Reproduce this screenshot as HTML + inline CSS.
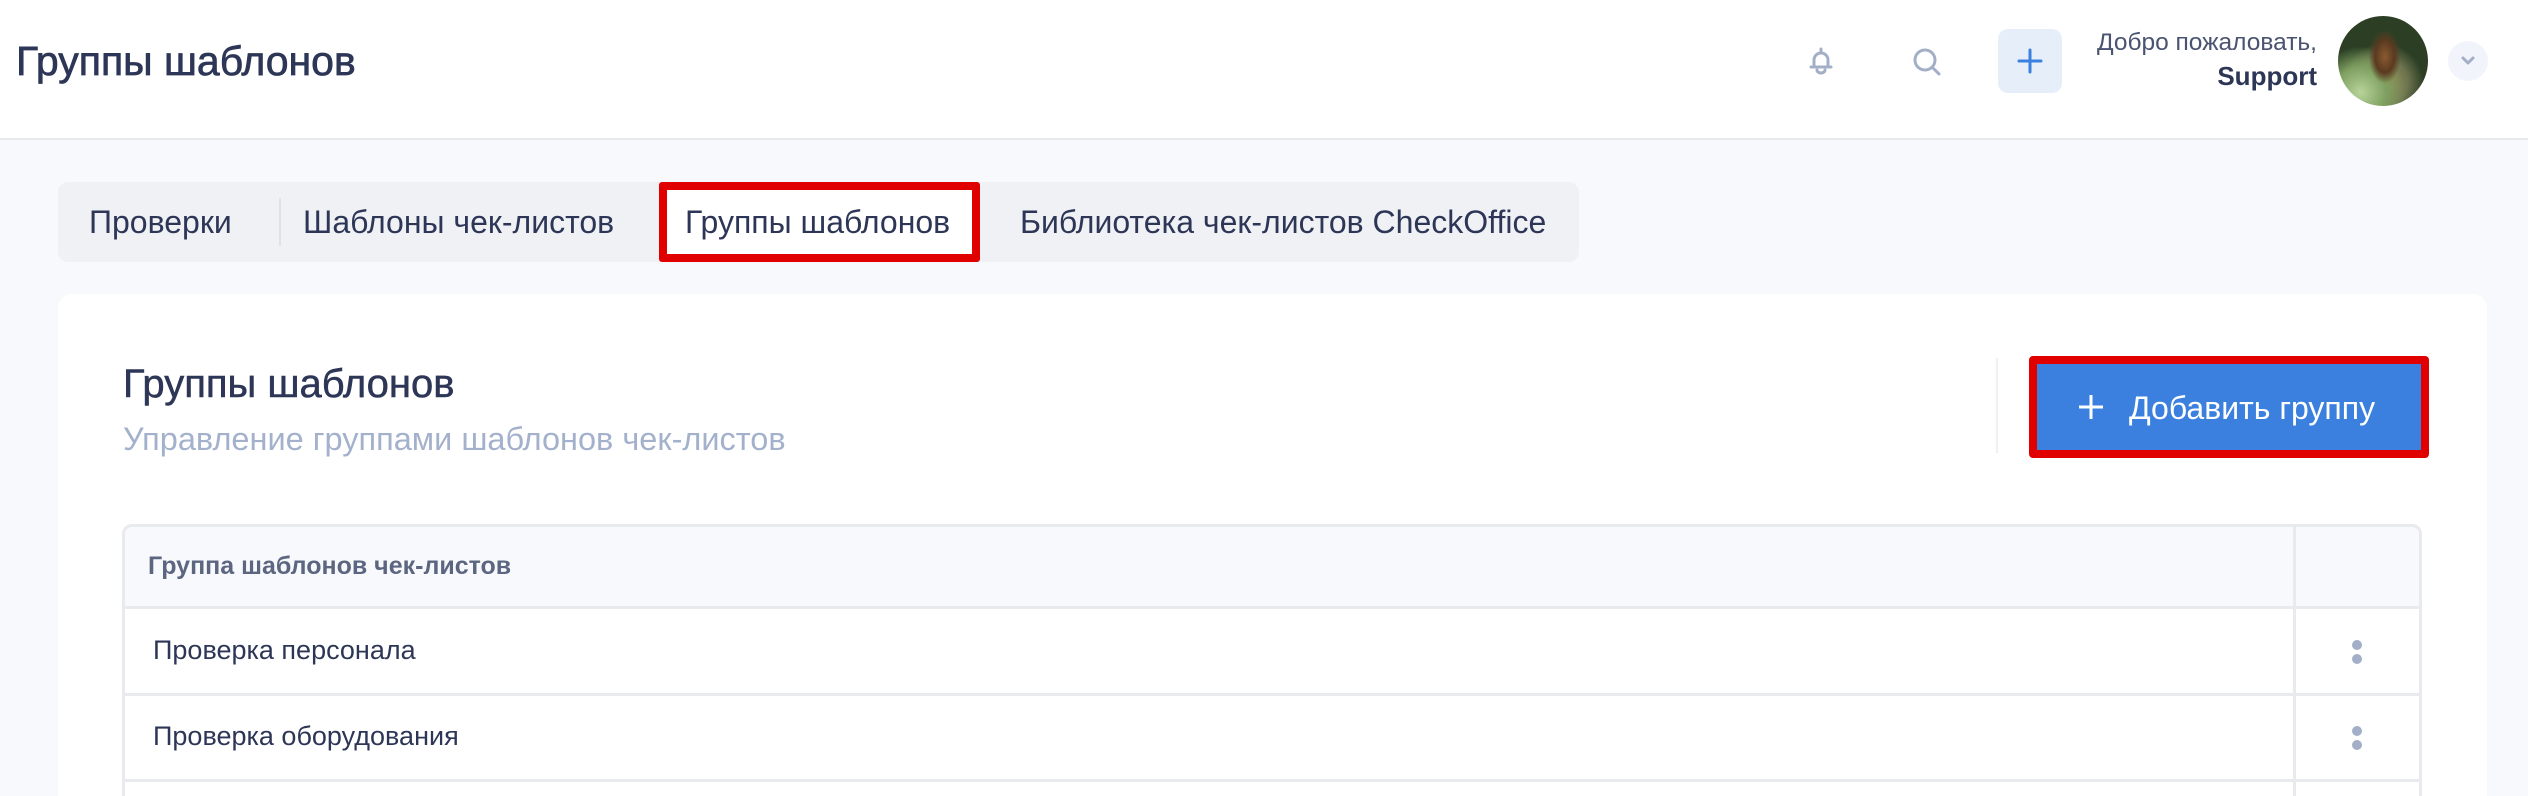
<!DOCTYPE html>
<html><head><meta charset="utf-8"><style>
*{margin:0;padding:0;box-sizing:border-box}
html,body{width:2528px;height:796px;overflow:hidden}
body{background:#f8f9fc;font-family:"Liberation Sans",Arial,sans-serif;color:#2d3656;position:relative}
.a{position:absolute;white-space:nowrap;line-height:1}
</style></head><body>
<div class="a" style="left:0;top:0;width:2528px;height:140px;background:#fff;border-bottom:2px solid #e9eaee"></div>
<div class="a" style="left:16px;top:41px;font-size:41px;-webkit-text-stroke:0.7px #2d3656;">Группы шаблонов</div>
<svg class="a" style="left:1806px;top:46px" width="30" height="30" viewBox="0 0 30 30" fill="none" stroke="#a3afc7" stroke-width="3" stroke-linecap="round" stroke-linejoin="round"><path d="M15 3v3M8 21V14a7 7 0 0 1 14 0v7M5 21h20M11 24a4 3 0 0 0 8 0"/></svg>
<svg class="a" style="left:1911px;top:46px" width="32" height="32" viewBox="0 0 32 32" fill="none" stroke="#a3afc7" stroke-width="3" stroke-linecap="round"><circle cx="14" cy="14" r="10"/><path d="M21.5 21.5L28 28"/></svg>
<div class="a" style="left:1998px;top:29px;width:64px;height:64px;background:#e6eff9;border-radius:10px"></div>
<svg class="a" style="left:2016px;top:47px" width="28" height="28" viewBox="0 0 28 28" stroke="#3b80de" stroke-width="3" stroke-linecap="round"><path d="M14 3v22M3 14h22"/></svg>
<div class="a" style="right:211px;top:31px;font-size:24.5px;color:#4a5370;text-align:right">Добро пожаловать,</div>
<div class="a" style="right:211px;top:63px;font-size:26px;font-weight:bold;color:#2d3656;text-align:right">Support</div>
<div class="a" style="left:2338px;top:16px;width:90px;height:90px;border-radius:50%;background:radial-gradient(ellipse 18% 30% at 52% 45%,#8a5a30 0,#5a3a20 60%,transparent 100%),radial-gradient(circle at 25% 85%,#b8d39a 0,#7ea060 25%,transparent 45%),radial-gradient(circle at 50% 75%,#9a8a50 0,#6f7550 30%,transparent 50%),#2c3f24"></div>
<div class="a" style="left:2448px;top:41px;width:40px;height:40px;border-radius:50%;background:#f1f4fb"></div>
<svg class="a" style="left:2460px;top:53px" width="16" height="16" viewBox="0 0 16 16" fill="none" stroke="#a3afc7" stroke-width="3" stroke-linecap="round" stroke-linejoin="round"><path d="M3 5l5 5 5-5"/></svg>

<div class="a" style="left:58px;top:182px;width:1521px;height:80px;background:#f0f1f5;border-radius:10px"></div>
<div class="a" style="left:89px;top:206px;font-size:32px;color:#2d3656">Проверки</div>
<div class="a" style="left:279px;top:198px;width:2px;height:48px;background:#dfe1e6"></div>
<div class="a" style="left:303px;top:206px;font-size:32px;color:#2d3656">Шаблоны чек-листов</div>
<div class="a" style="left:659px;top:182px;width:321px;height:80px;background:#fff;border:8px solid #e10000;border-radius:3px"></div>
<div class="a" style="left:685px;top:206px;font-size:32px;color:#2d3656">Группы шаблонов</div>
<div class="a" style="left:1020px;top:206px;font-size:32px;color:#2d3656">Библиотека чек-листов CheckOffice</div>

<div class="a" style="left:58px;top:294px;width:2429px;height:502px;background:#fff;border-radius:14px 14px 0 0"></div>
<div class="a" style="left:123px;top:364px;font-size:40px;color:#2d3656;-webkit-text-stroke:0.5px #2d3656">Группы шаблонов</div>
<div class="a" style="left:123px;top:423px;font-size:32.5px;color:#a3b1cc">Управление группами шаблонов чек-листов</div>
<div class="a" style="left:1996px;top:358px;width:2px;height:95px;background:#eef0f3"></div>
<div class="a" style="left:2029px;top:356px;width:400px;height:102px;background:#3b80de;border:8px solid #e10000;border-radius:4px"></div>
<svg class="a" style="left:2077px;top:393px" width="28" height="28" viewBox="0 0 28 28" stroke="#fff" stroke-width="3"><path d="M14 2v24M2 14h24"/></svg>
<div class="a" style="left:2129px;top:392px;font-size:32px;color:#fff">Добавить группу</div>

<div class="a" style="left:122px;top:524px;width:2300px;height:272px;border:3px solid #e9eaed;border-bottom:none;border-radius:10px 10px 0 0;background:#fff;overflow:hidden">
 <div style="position:absolute;left:0;top:0;width:100%;height:82px;background:#f8f9fc;border-bottom:3px solid #e9eaed"></div>
 <div style="position:absolute;left:0;top:166px;width:100%;height:3px;background:#e9eaed"></div>
 <div style="position:absolute;left:0;top:252px;width:100%;height:3px;background:#e9eaed"></div>
 <div style="position:absolute;left:2168px;top:0;width:3px;height:272px;background:#e9eaed"></div>
</div>
<div class="a" style="left:148px;top:554px;font-size:25px;font-weight:bold;color:#5c6680">Группа шаблонов чек-листов</div>
<div class="a" style="left:153px;top:637px;font-size:27px;color:#2d3656">Проверка персонала</div>
<div class="a" style="left:153px;top:723px;font-size:27px;color:#2d3656">Проверка оборудования</div>
<div class="a" style="left:2352px;top:640px;width:10px;height:10px;border-radius:50%;background:#a3afc7"></div>
<div class="a" style="left:2352px;top:654px;width:10px;height:10px;border-radius:50%;background:#a3afc7"></div>
<div class="a" style="left:2352px;top:726px;width:10px;height:10px;border-radius:50%;background:#a3afc7"></div>
<div class="a" style="left:2352px;top:740px;width:10px;height:10px;border-radius:50%;background:#a3afc7"></div>
</body></html>
